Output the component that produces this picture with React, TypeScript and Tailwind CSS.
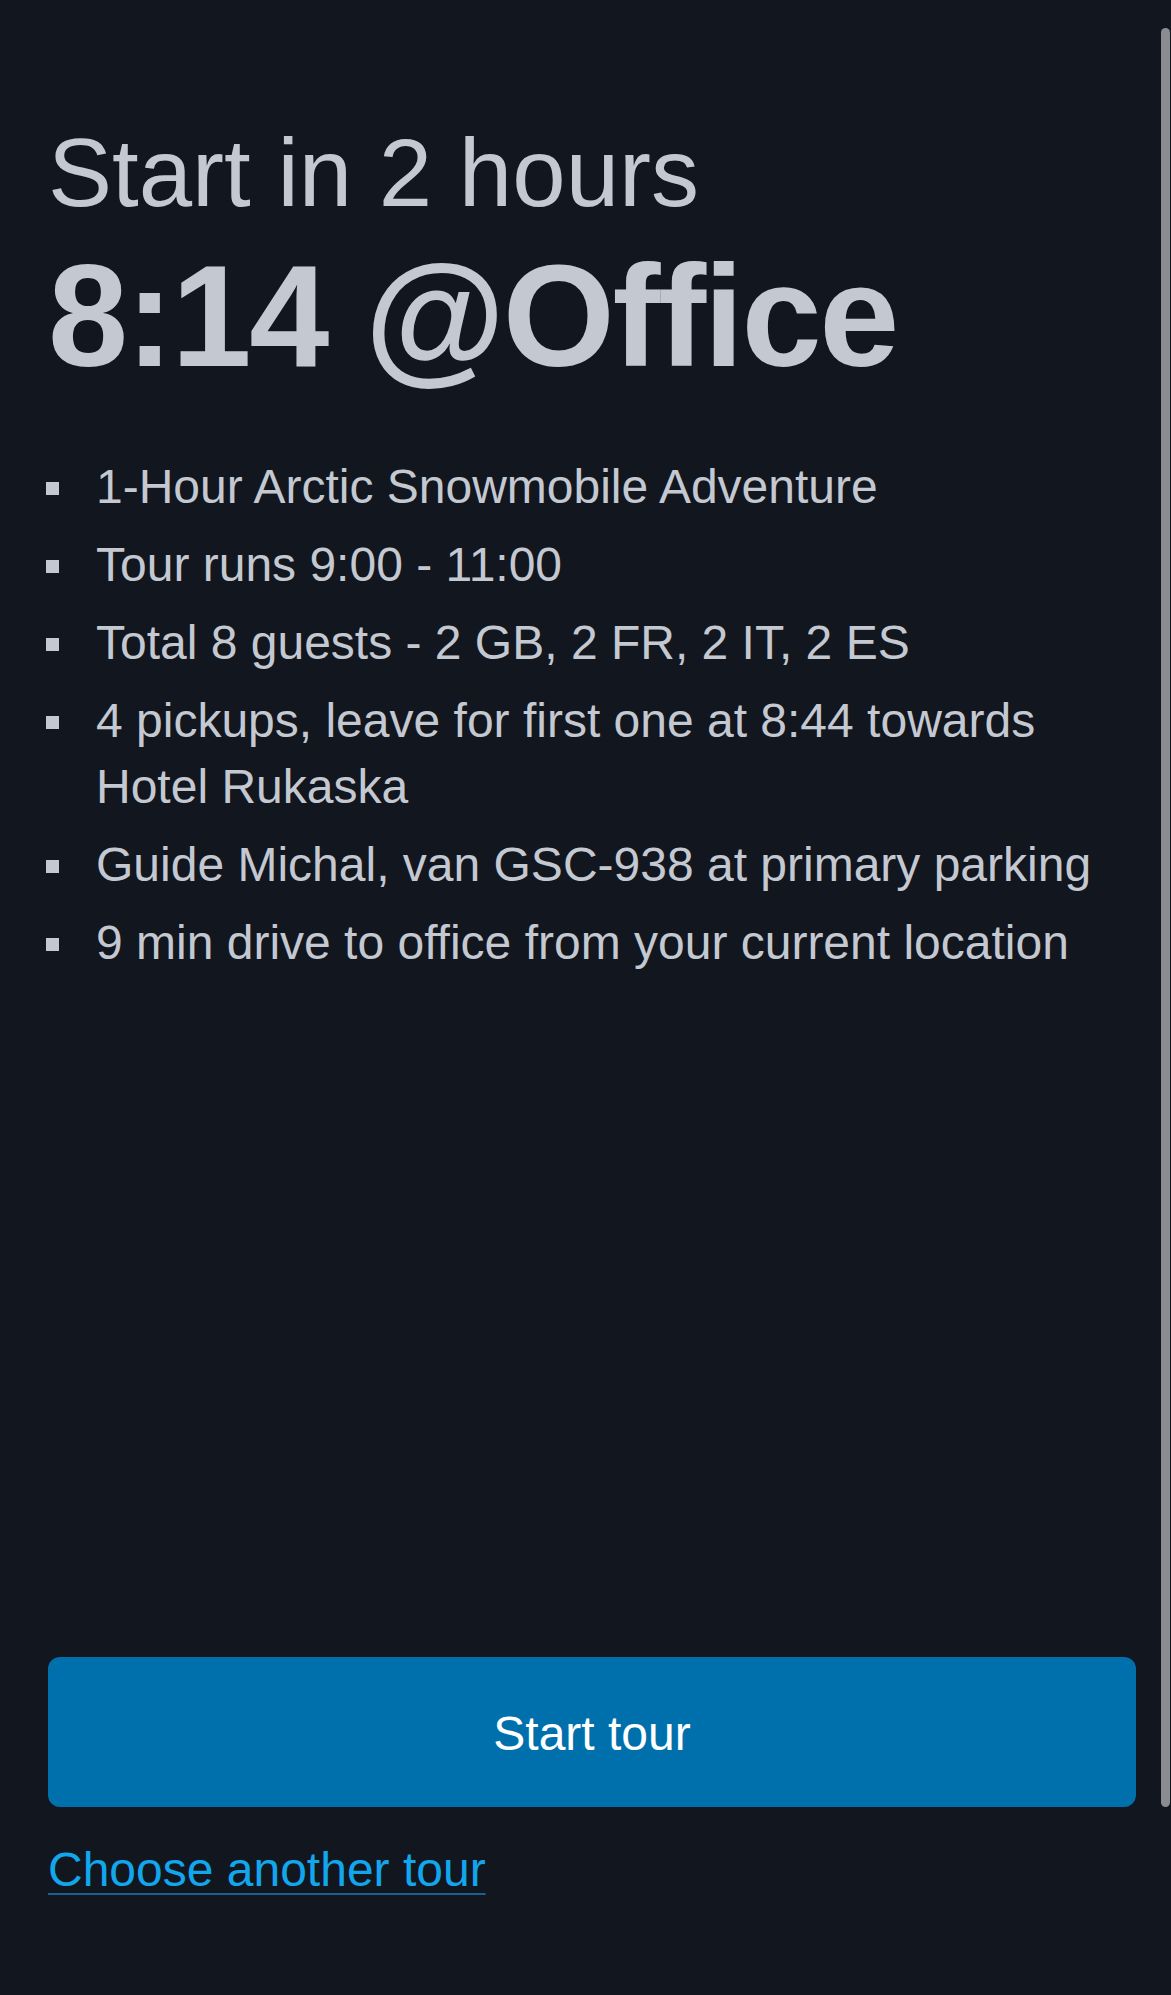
import * as React from "react";

const TOUR_NOTES = [
  "1-Hour Arctic Snowmobile Adventure",
  "Tour runs 9:00 - 11:00",
  "Total 8 guests - 2 GB, 2 FR, 2 IT, 2 ES",
  "4 pickups, leave for first one at 8:44 towards Hotel Rukaska",
  "Guide Michal, van GSC-938 at primary parking",
  "9 min drive to office from your current location",
];

const App = () => {
  return (
    <div className="relative min-h-screen flex flex-col bg-[#12161f] pt-[115px] pb-[92px] pl-[48px] pr-[35px] font-['Liberation_Sans',Arial,sans-serif] text-[#c4c8d0]">
      {/* header */}
      <h2 className="text-[96px] leading-[115px] font-normal">Start in 2 hours</h2>
      <h1 className="mt-[8px] text-[144px] leading-[158px] font-bold tracking-[-0.016em]">8:14 @Office</h1>

      {/* tour notes */}
      <ul className="mt-[58px] flex flex-col gap-[12px]">
        {TOUR_NOTES.map((note) => (
          <li key={note} className="flex items-start text-[48px] leading-[66px]">
            <span className="shrink-0 w-[13px] h-[13px] mt-[28px] ml-[-2px] bg-[#c4c8d0]" />
            <span className="ml-[37px]">{note}</span>
          </li>
        ))}
      </ul>

      <div className="flex-1" />

      {/* actions */}
      <button className="h-[150px] w-full rounded-[12px] bg-[#0070ad] pt-[4px] text-white text-[48px] leading-[66px]">
        Start tour
      </button>
      <a
        href="#"
        className="mt-[30px] self-start text-[48px] leading-[66px] text-[#12a6ec] underline decoration-2 underline-offset-[7px] decoration-[#17618c]"
      >
        Choose another tour
      </a>

      {/* overlay scrollbar */}
      <div className="absolute right-[1px] top-[28px] w-[9px] h-[1779px] rounded-full bg-[#8b8c91]" />
    </div>
  );
};

export default App;
